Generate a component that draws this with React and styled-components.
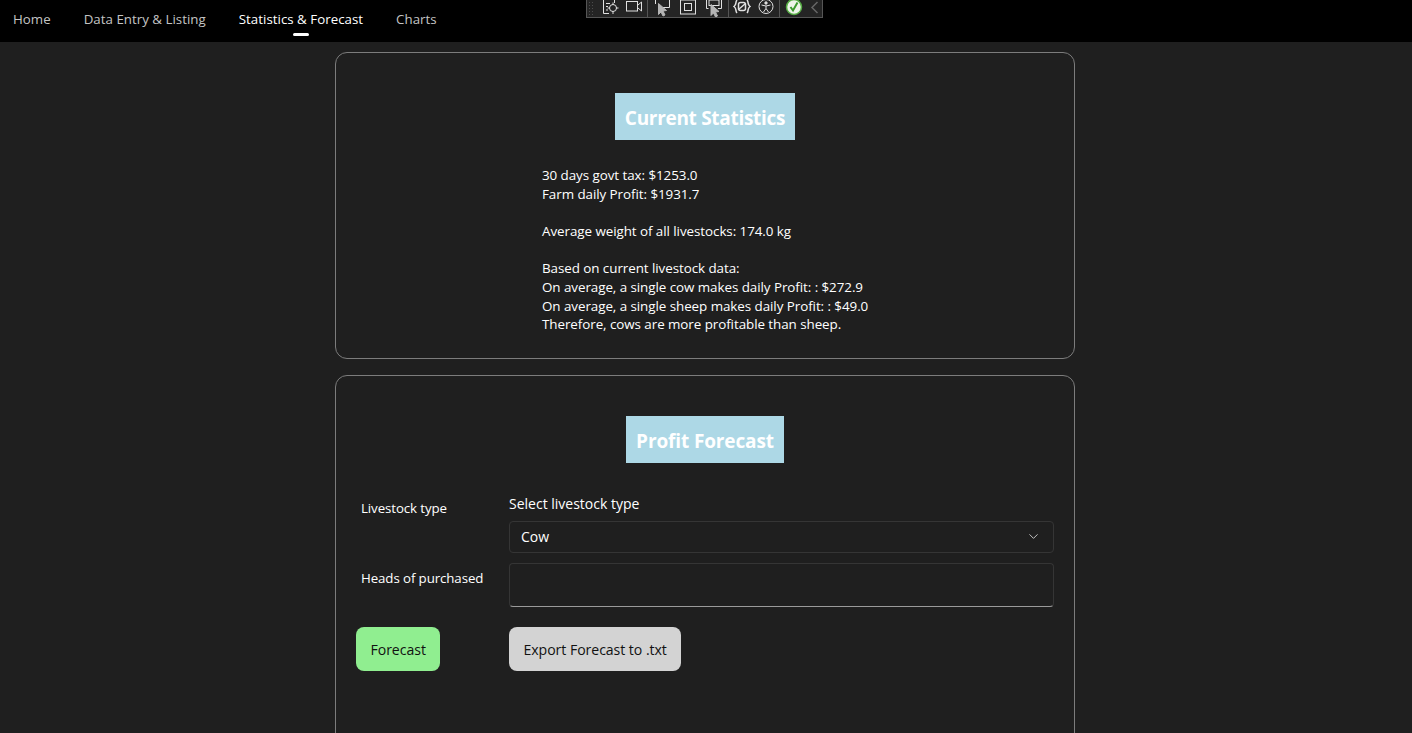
import React from 'react';
import styled, { createGlobalStyle } from 'styled-components';
import { ChevronDown } from 'lucide-react';

const GlobalStyle = createGlobalStyle`
  html, body {
    margin: 0;
    height: 100%;
    overflow: hidden;
    background: #1f1f1f;
    color: #fff;
    font-family: "Open Sans", "Noto Sans", sans-serif;
    font-size: 14px;
  }
  * { box-sizing: border-box; }
`;

const Page = styled.div`
  position: relative;
  height: 733px;
  padding-right: 2px;
  overflow: hidden;
`;

const Nav = styled.nav`
  height: 42px;
  margin-right: -2px;
  background: #000;
  display: flex;
  align-items: flex-start;
  padding-left: 13px;
  gap: 33px;
`;

const NavItem = styled.div`
  position: relative;
  height: 38px;
  line-height: 38px;
  font-size: 13.3px;
  letter-spacing: 0.02px;
  color: ${props => (props.$active ? '#fff' : '#c4c4c4')};
  white-space: nowrap;

  ${props => props.$active && `
    &::after {
      content: "";
      position: absolute;
      left: 50%;
      bottom: 2px;
      width: 16px;
      height: 3px;
      margin-left: -8px;
      border-radius: 2px;
      background: #fff;
    }
  `}
`;

const DevToolbar = styled.div`
  position: absolute;
  left: 586px;
  top: 0;
  width: 237px;
  height: 18px;
  display: flex;
  align-items: stretch;
  background: #242424;
  border: 1px solid #555;
  border-top: none;
`;

const Grip = styled.div`
  flex: none;
  width: 7px;
  height: 15px;
  margin: 1px 2px 0 1px;
  background-image: radial-gradient(#4c4c4c 1px, transparent 1px);
  background-size: 3px 3px;
`;

const ToolGroup = styled.div`
  display: flex;
  align-items: flex-start;
  gap: ${props => props.$gap}px;
  padding: 0 ${props => props.$pad}px;
  border-right: 1px solid ${props => (props.$last ? 'transparent' : '#555')};
`;

const ToolIcon = styled.svg`
  width: ${props => props.$w || 18}px;
  height: 17px;
  flex: none;
  fill: none;
  stroke: ${props => props.$color || '#e0e0e0'};
  stroke-width: 1;
`;

const Main = styled.main`
  width: 740px;
  margin: 10px auto 0;
  display: flex;
  flex-direction: column;
  gap: 16px;
`;

const Card = styled.section`
  border: 1px solid #7c7c7c;
  border-radius: 12px;
  padding: 40px 20px 0;
  min-height: ${props => props.$minHeight}px;
`;

const TitleRow = styled.div`
  display: flex;
  justify-content: center;
`;

const Title = styled.h2`
  margin: 0;
  height: 47px;
  padding: 0 10px;
  background: #add8e6;
  color: #fff;
  font-size: 19px;
  font-weight: 700;
  line-height: 51px;
  letter-spacing: ${props => props.$spacing}px;
`;

const Stats = styled.div`
  margin: 26.4px 0 0 186px;
  font-size: 13.4px;
  line-height: 18.6px;
  letter-spacing: -0.06px;
  white-space: pre-line;
`;

const Form = styled.div`
  margin-top: 31px;
  display: grid;
  grid-template-columns: 153px 545px;
  align-items: start;
`;

const Label = styled.div`
  padding: ${props => props.$top}px 0 0 5px;
  font-size: 13.3px;
  letter-spacing: -0.1px;
  line-height: 18px;
`;

const FieldColumn = styled.div`
  display: flex;
  flex-direction: column;
`;

const FieldCaption = styled.div`
  font-size: 14px;
  line-height: 20px;
  height: 27px;
`;

const Select = styled.div`
  height: 32px;
  padding: 0 12px 1px 11px;
  display: flex;
  align-items: center;
  justify-content: space-between;
  border: 1px solid #353535;
  border-radius: 4px;
  font-size: 14px;
  color: #fff;
  margin-bottom: 10px;
  svg { color: #ccc; }
`;

const Input = styled.div`
  height: 44px;
  border: 1px solid #353535;
  border-bottom: 1px solid #9a9a9a;
  border-radius: 4px;
`;

const Actions = styled.div`
  margin-top: 20px;
  display: grid;
  grid-template-columns: 153px auto;
  justify-items: start;
`;

const Button = styled.button`
  height: 44px;
  padding: 0 14.5px;
  border: none;
  border-radius: 8px;
  background: ${props => props.$bg};
  color: #111;
  font-family: inherit;
  font-size: 14.1px;
  letter-spacing: -0.05px;
`;

const statsText = `30 days govt tax: $1253.0
Farm daily Profit: $1931.7

Average weight of all livestocks: 174.0 kg

Based on current livestock data:
On average, a single cow makes daily Profit: : $272.9
On average, a single sheep makes daily Profit: : $49.0
Therefore, cows are more profitable than sheep.`;

const navItems = ['Home', 'Data Entry & Listing', 'Statistics & Forecast', 'Charts'];

const Toolbar = () => (
  <DevToolbar>
    <Grip />
    <ToolGroup $gap={6} $pad={4}>
      <ToolIcon viewBox="0 0 18 17">
        <path d="M13.500 0v3M2.500 0v13.500H8M5 3.500h4M5 6.500h2M5 10h2" />
        <circle cx="12" cy="8" r="3.500" />
        <path d="M12 2.500v2.500M12 11v3M6.500 8H9M15 8h2.500" />
      </ToolIcon>
      <ToolIcon viewBox="0 0 18 17">
        <rect x="1.500" y="1.500" width="11" height="9.500" />
        <path d="M13 5l3.500-3v9L13 8" />
      </ToolIcon>
    </ToolGroup>
    <ToolGroup $gap={8} $pad={5}>
      <ToolIcon viewBox="0 0 18 17">
        <path d="M2.500 0v4M16.500 0v7.500H10" />
        <path d="M5.500 3.500l8 7-3.500.5 2 4-2 1-2-4-2.500 2.500z" fill="#b5b5b5" stroke="#b5b5b5" />
      </ToolIcon>
      <ToolIcon viewBox="0 0 18 17">
        <rect x="1.500" y="0" width="15" height="14" />
        <rect x="5.500" y="3.500" width="7" height="7" />
      </ToolIcon>
      <ToolIcon viewBox="0 0 18 17">
        <path d="M1.500 0v8.500M16.500 0v8.500M1.500 8.500h2M13 8.500h3.500" />
        <rect x="4" y="0" width="10" height="5.500" />
        <path d="M6 4.500l8 7-3.500.5 2 4-2 1-2-4-2.500 2.500z" fill="#b5b5b5" stroke="#b5b5b5" />
      </ToolIcon>
    </ToolGroup>
    <ToolGroup $gap={6} $pad={4}>
      <ToolIcon viewBox="0 0 18 17">
        <path d="M4 0C2 2 4 4.500 1 6.500c3 2 1 4.500 3 6.500M14 0c2 2 0 4.500 3 6.500-3 2-1 4.500-3 6.500" strokeWidth="1.500" />
        <rect x="5.500" y="2.500" width="7" height="8" rx="2" strokeWidth="1.500" />
        <path d="M5.500 9.500l7-6" strokeWidth="1.500" />
      </ToolIcon>
      <ToolIcon viewBox="0 0 18 17">
        <circle cx="9" cy="6.500" r="7" />
        <circle cx="9" cy="3" r="1.200" fill="#e0e0e0" />
        <path d="M4.500 5L9 6l4.500-1M9 6v2.500L6.500 12M9 8.500l2.500 3.500" />
      </ToolIcon>
    </ToolGroup>
    <ToolGroup $gap={7} $pad={5} $last>
      <ToolIcon viewBox="0 0 18 17">
        <circle cx="9" cy="7" r="7.500" fill="#eef5ea" stroke="#55ac43" strokeWidth="1.500" />
        <path d="M5.500 7l2.500 3.500L12.500 2.500" stroke="#3c9a2e" strokeWidth="2" />
      </ToolIcon>
      <ToolIcon $w={9} $color="#666" viewBox="0 0 9 17">
        <path d="M7.500 2L2 7.500 7.500 13" strokeWidth="1.500" />
      </ToolIcon>
    </ToolGroup>
  </DevToolbar>
);

const App = () => {
  return (
    <>
      <GlobalStyle />
      <Page>
        <Nav>
          {navItems.map(item => (
            <NavItem key={item} $active={item === 'Statistics & Forecast'}>{item}</NavItem>
          ))}
        </Nav>
        <Toolbar />

        <Main>
          <Card $minHeight={307}>
            <TitleRow>
              <Title $spacing={-0.3}>Current Statistics</Title>
            </TitleRow>
            <Stats>{statsText}</Stats>
          </Card>

          <Card $minHeight={400}>
            <TitleRow>
              <Title $spacing={-0.12}>Profit Forecast</Title>
            </TitleRow>
            <Form>
              <Label $top={5}>Livestock type</Label>
              <FieldColumn>
                <FieldCaption>Select livestock type</FieldCaption>
                <Select>
                  Cow
                  <ChevronDown size={15} strokeWidth={1.5} />
                </Select>
              </FieldColumn>
              <Label $top={6}>Heads of purchased</Label>
              <Input />
            </Form>
            <Actions>
              <Button $bg="#90ee90">Forecast</Button>
              <Button $bg="#d3d3d3">Export Forecast to .txt</Button>
            </Actions>
          </Card>
        </Main>
      </Page>
    </>
  );
};

export default App;
